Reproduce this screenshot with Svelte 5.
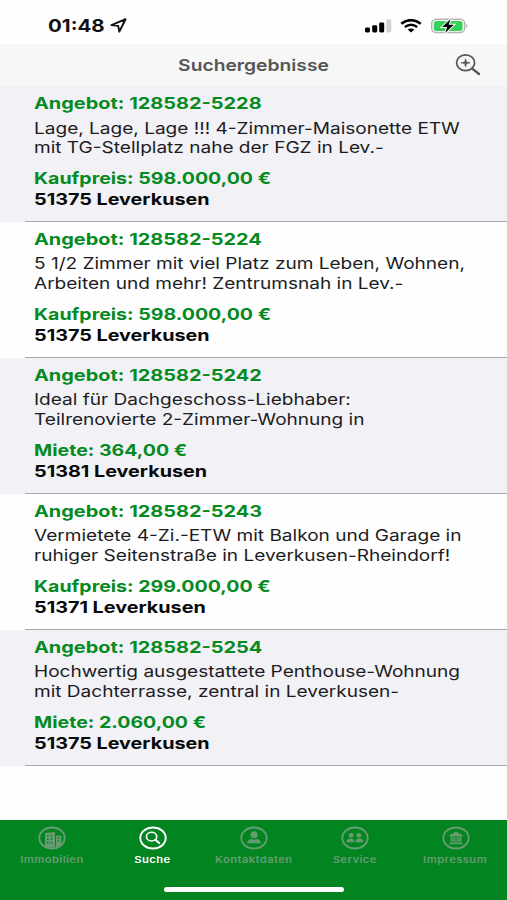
<script>
 const offers = [
     { id: '128582-5228', lines: ['Lage, Lage, Lage !!! 4-Zimmer-Maisonette ETW', 'mit TG-Stellplatz nahe der FGZ in Lev.-'], price: 'Kaufpreis: 598.000,00 €', place: '51375 Leverkusen' },
     { id: '128582-5224', lines: ['5 1/2 Zimmer mit viel Platz zum Leben, Wohnen,', 'Arbeiten und mehr! Zentrumsnah in Lev.-'], price: 'Kaufpreis: 598.000,00 €', place: '51375 Leverkusen' },
     { id: '128582-5242', lines: ['Ideal für Dachgeschoss-Liebhaber:', 'Teilrenovierte 2-Zimmer-Wohnung in'], price: 'Miete: 364,00 €', place: '51381 Leverkusen' },
     { id: '128582-5243', lines: ['Vermietete 4-Zi.-ETW mit Balkon und Garage in', 'ruhiger Seitenstraße in Leverkusen-Rheindorf!'], price: 'Kaufpreis: 299.000,00 €', place: '51371 Leverkusen' },
     { id: '128582-5254', lines: ['Hochwertig ausgestattete Penthouse-Wohnung', 'mit Dachterrasse, zentral in Leverkusen-'], price: 'Miete: 2.060,00 €', place: '51375 Leverkusen' }
 ];

 const tabs = ['Immobilien', 'Suche', 'Kontaktdaten', 'Service', 'Impressum'];
 let active = $state('Suche');
</script>

<div class="screen">
    <div class="status">
        <span class="clock">01:48</span>
        <svg class="arrow" viewBox="0 0 18 16" preserveAspectRatio="none">
            <path d="M1.5 7.6 L16 1.3 L9.6 14.5 L8.4 8.4 Z" fill="none" stroke="#111" stroke-width="2" stroke-linejoin="round" />
        </svg>
        <div class="indicators">
            <svg width="27" height="14" viewBox="0 0 27 14">
                <rect x="0" y="8.5" width="5" height="5" rx="1.4" />
                <rect x="7.2" y="6.2" width="5" height="7.3" rx="1.4" />
                <rect x="14.2" y="3.4" width="5" height="10.1" rx="1.4" />
                <rect x="21.3" y="0.5" width="5" height="13" rx="1.4" fill="#d2d2d2" />
            </svg>
            <svg class="wifi" width="22" height="14" viewBox="0 0 22 14">
                <path d="M1.2 4.8 Q11 -2.6 20.8 4.8" fill="none" stroke="#000" stroke-width="2.5" />
                <path d="M4.8 8 Q11 3.4 17.2 8" fill="none" stroke="#000" stroke-width="2.3" />
                <path d="M7.6 10.6 Q11 8.2 14.4 10.6 L11 13.6 Z" />
            </svg>
            <svg class="battery" width="38" height="16" viewBox="0 0 38 16">
                <rect x="0.7" y="1.2" width="33" height="13.4" rx="4.5" fill="#fff" stroke="#b4b4b4" stroke-width="1.5" />
                <rect x="2.8" y="2.9" width="28.8" height="10" rx="2.6" fill="#35cf59" />
                <path d="M35.2 5.6 Q37.4 7.9 35.2 10.2 Z" fill="#aaa" />
                <path d="M19.6 1 L11.2 9 H16.2 L14.2 15 L22.8 6.8 H17.7 Z" stroke="#fff" stroke-width="2" paint-order="stroke" />
            </svg>
        </div>
    </div>

    <header>
        <h1>Suchergebnisse</h1>
        <svg class="zoomIn" width="26" height="22" viewBox="0 0 26 22" fill="none" stroke="#555">
            <ellipse cx="10.6" cy="8.8" rx="9" ry="7.9" stroke-width="1.7" />
            <path d="M17.2 14.6 L24 20" stroke-width="2.4" stroke-linecap="round" />
            <path d="M6.1 8.8 L9.7 8 L10.6 4.8 L11.5 8 L15.1 8.8 L11.5 9.6 L10.6 12.8 L9.7 9.6 Z" fill="#555" stroke-width="0.7" />
        </svg>
    </header>

    <main>
        {#each offers as offer}
            <article>
                <h2><span>Angebot: {offer.id}</span></h2>
                <p>
                    {#each offer.lines as line}
                        <span>{line}</span>
                    {/each}
                </p>
                <div class="price"><span>{offer.price}</span></div>
                <div class="place"><span>{offer.place}</span></div>
            </article>
        {/each}
    </main>

    <nav>
        <div class="tabs">
            {#each tabs as tab}
                <button class:active={active === tab} onclick={() => active = tab}>
                    <svg width="28" height="24" viewBox="0 0 28 24" fill="currentColor">
                        <ellipse cx="14" cy="12" rx="12.7" ry="10.5" fill="none" stroke="currentColor" stroke-width="1.9" />
                        {#if tab === 'Immobilien'}
                            <path fill-rule="evenodd" d="M7 7 L17 6 V21.5 H7 Z M9 9 V10.4 H10.5 V9 Z M12.8 9 V10.4 H14.3 V9 Z M9 12.5 V13.9 H10.5 V12.5 Z M12.8 12.5 V13.9 H14.3 V12.5 Z M9 16 V17.4 H10.5 V16 Z M12.8 16 V17.4 H14.3 V16 Z" />
                            <path fill-rule="evenodd" d="M18 9.5 H23.5 V19 L18 21.5 Z M19.7 11.3 V12.6 H21.3 V11.3 Z M19.7 14.3 V15.6 H21.3 V14.3 Z" />
                        {:else if tab === 'Suche'}
                            <ellipse cx="12.6" cy="10.6" rx="5.2" ry="4.4" fill="none" stroke="currentColor" stroke-width="1.6" />
                            <path d="M16.4 13.9 L20.2 17" stroke="currentColor" stroke-width="2.2" stroke-linecap="round" />
                        {:else if tab === 'Kontaktdaten'}
                            <ellipse cx="14" cy="8.8" rx="3.5" ry="3.5" />
                            <path d="M7 17.3 Q7.3 13.8 11.6 13 Q14 14.5 16.4 13 Q20.7 13.8 21 17.3 Z" />
                        {:else if tab === 'Service'}
                            <ellipse cx="10.2" cy="9.3" rx="2.5" ry="2.4" />
                            <ellipse cx="17.8" cy="9.3" rx="2.5" ry="2.4" />
                            <path d="M5.4 16.2 Q5.6 12.6 10 12.6 Q13.2 12.6 13.5 16.2 Z" />
                            <path d="M14.5 16.2 Q14.8 12.6 18 12.6 Q22.4 12.6 22.6 16.2 Z" />
                        {:else}
                            <path d="M7.3 9.3 L14 5.5 L20.7 9.3 V10.5 H7.3 Z M8.7 11 H10.7 V16 H8.7 Z M11.6 11 H13.4 V16 H11.6 Z M14.6 11 H16.4 V16 H14.6 Z M17.3 11 H19.3 V16 H17.3 Z M7.3 16.4 H20.7 V18.2 H7.3 Z" />
                        {/if}
                    </svg>
                    <span>{tab}</span>
                </button>
            {/each}
        </div>
        <div class="homeBar"></div>
    </nav>
</div>

<style>
 :global(body) {
     background: #fefefe;
 }

 .screen {
     display: flex;
     flex-direction: column;
     width: 507px;
     height: 900px;
     overflow: hidden;
     font-family: Inter, "Liberation Sans", sans-serif;
     background: #fefefe;
 }

 .status {
     display: flex;
     align-items: center;
     box-sizing: border-box;
     height: 44px;
     padding: 7px 38px 0 48px;
 }

 .clock {
     width: 62px;
     font-size: 17.5px;
     font-weight: 700;
     color: #111;
     transform: scaleX(1.17);
     transform-origin: left;
 }

 .arrow {
     width: 17.5px;
     height: 15px;
 }

 .indicators {
     display: flex;
     align-items: center;
     margin-left: auto;
 }

 .wifi {
     margin-left: 8px;
 }

 .battery {
     margin-left: 9px;
 }

 header {
     display: grid;
     grid-template-columns: 52px 1fr 52px;
     align-items: center;
     height: 42px;
     background: #f7f7f7;
 }

 h1 {
     grid-column: 2;
     margin: 0;
     font-size: 16.5px;
     font-weight: 600;
     text-align: center;
     color: #555;
     transform: scaleX(1.167);
 }

 main {
     flex: 1;
 }

 article {
     box-sizing: border-box;
     height: 135.95px;
     padding: 7px 0 0 34.4px;
     background: linear-gradient(#a9a9ad, #a9a9ad) 25px 100% / 100% 1px no-repeat;
     white-space: nowrap;
     font-size: 16px;
 }

 article:nth-child(odd) {
     background-color: #f1f1f6;
 }

 article span {
     display: block;
     width: max-content;
     transform: scaleX(1.19);
     transform-origin: left;
 }

 h2,
 .price,
 .place {
     margin: 0;
     font-size: 16px;
     font-weight: 700;
     line-height: 20px;
 }

 h2,
 .price {
     color: #068a22;
 }

 h2 span {
     transform: scaleX(1.245);
 }

 .price span {
     transform: scaleX(1.222);
 }

 .place span {
     transform: scaleX(1.235);
 }

 p {
     margin: 5.5px 0 11px;
     line-height: 19.4px;
     color: #1c1c1e;
 }

 .place {
     padding-top: 0.5px;
     color: #080808;
 }

 nav {
     box-sizing: border-box;
     height: 80.5px;
     padding-top: 6.5px;
     background: #028520;
 }

 .tabs {
     display: grid;
     grid-template-columns: repeat(5, 101px);
     justify-content: center;
     height: 61px;
 }

 button {
     display: flex;
     flex-direction: column;
     align-items: center;
     padding: 0;
     border: 0;
     background: none;
     font: 600 9.5px/14px Inter, sans-serif;
     color: #659c70;
     cursor: pointer;
 }

 button span {
     margin-top: 3px;
     letter-spacing: 0.35px;
     transform: scaleX(1.18);
 }

 button.active {
     color: #fff;
 }

 .homeBar {
     width: 180px;
     height: 5px;
     margin: 0 auto;
     border-radius: 3px;
     background: #fff;
 }
</style>
